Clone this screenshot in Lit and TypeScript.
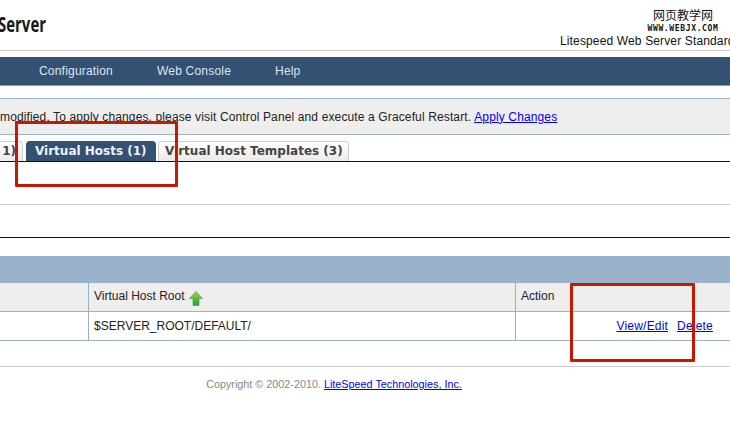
import { LitElement, html, css } from "lit";
import { customElement } from "lit/decorators.js";

@customElement("app-root")
export class AppRoot extends LitElement {
  static styles = css`
    :host { display: block; position: relative; width: 730px; height: 434px; overflow: hidden; background: #fff; font-family: "Liberation Sans", Arial, sans-serif; font-size: 12px; color: #222; }
    a { color: #00f; text-decoration: underline; }
    .top { height: 50px; display: flex; justify-content: space-between; }
    .brand { width: 170px; flex: none; white-space: nowrap; overflow: hidden; }
    .logo { font-family: "Open Sans", sans-serif; font-weight: 700; font-size: 22px; line-height: 30px; color: #1a1a1a; margin: 8px 0 0 -2px; transform: scaleX(0.68); transform-origin: left center; }
    .right { width: 170px; flex: none; overflow: hidden; white-space: nowrap; }
    .wm { display: flex; flex-direction: column; align-items: center; width: 90px; margin: 8px 0 0 78px; color: #111; }
    .wm b { font: 400 12px/14px "Noto Sans CJK SC", sans-serif; }
    .wm i { font: 700 8px/10px "DejaVu Sans Mono", monospace; letter-spacing: 0.65px; margin-top: 2px; }
    .title { font-size: 12px; line-height: 14px; color: #111; letter-spacing: 0.14px; }
    .rule { height: 1px; background: #ccc; }
    .nav { margin-top: 6px; height: 28px; background: #345073; border-bottom: 1px solid #999; display: flex; align-items: center; padding-left: 39px; gap: 44px; color: #dfe6ee; letter-spacing: 0.2px; }
    .notice { margin-top: 12px; height: 35px; border-top: 1px solid #9ab3cf; border-bottom: 1px solid #9ab3cf; background: #eee; display: flex; align-items: center; white-space: nowrap; color: #222; letter-spacing: 0.13px; }
    .notice a { margin-left: 3px; }
    .tabs { margin: 5px 0 0 -60px; height: 21px; display: flex; align-items: flex-end; gap: 2px; font: 700 12px/20px "DejaVu Sans", sans-serif; }
    .tab { height: 20px; box-sizing: border-box; padding: 0 6px; border-radius: 4px 4px 0 0; border: 1px solid #ccc; border-bottom: none; background: linear-gradient(#fff, #eaeaea); color: #444; white-space: nowrap; line-height: 19px; }
    .tab.first { width: 83px; text-align: right; padding: 0 6px 0 0; }
    .tab.active { background: #345073; border-color: #345073; color: #eef2f6; margin-left: 1px; width: 130px; padding: 0 8px; }
    .tab.last { width: 191px; }
    .black { height: 1px; background: #111; }
    .gray { height: 1px; background: #ccc; }
    .g1 { margin-top: 42px; }
    .b2 { margin-top: 32px; }
    .band { margin-top: 18px; height: 27px; background: #9ab2cc; }
    .grid { display: grid; grid-template-columns: 88px 427px 1fr; border-bottom: 1px solid #9ab2cc; height: 28px; }
    .cell { box-sizing: border-box; height: 28px; border-left: 1px solid #9ab2cc; padding: 0 5px; display: flex; align-items: center; white-space: nowrap; }
    .cell:first-child { border-left: none; }
    .head { background: #eee; }
    .head .cell { padding-bottom: 3px; }
    .actions { justify-content: flex-end; gap: 9px; padding-right: 17px; letter-spacing: 0.2px; }
    .arrow { width: 14px; height: 15px; margin: 5px 0 0 4px; flex: none; }
    .g2 { margin-top: 25px; }
    .foot { text-align: center; font-size: 10.8px; color: #888; margin-top: 10px; padding-right: 62px; line-height: 14px; white-space: nowrap; }
    .mark { position: absolute; box-sizing: border-box; border: 3px solid #c81800; border-radius: 1px; }
    .m1 { left: 15px; top: 121px; width: 163px; height: 66px; }
    .m2 { left: 570px; top: 283px; width: 125px; height: 79px; }
  `;

  render() {
    return html`
      <div class="top">
        <div class="brand"><div class="logo">Server</div></div>
        <div class="right">
          <div class="wm"><b>网页教学网</b><i>WWW.WEBJX.COM</i></div>
          <div class="title">Litespeed Web Server Standard</div>
        </div>
      </div>
      <div class="rule"></div>
      <div class="nav"><span>Configuration</span><span>Web Console</span><span>Help</span></div>
      <div class="notice"><span>modified. To apply changes, please visit Control Panel and execute a Graceful Restart.</span><a href="#">Apply Changes</a></div>
      <div class="tabs">
        <div class="tab first">1)</div>
        <div class="tab active">Virtual Hosts (1)</div>
        <div class="tab last">Virtual Host Templates (3)</div>
      </div>
      <div class="black"></div>
      <div class="gray g1"></div>
      <div class="black b2"></div>
      <div class="band"></div>
      <div class="grid head">
        <div class="cell"></div>
        <div class="cell">Virtual Host Root
          <svg class="arrow" viewBox="0 0 14 15"><defs><linearGradient id="g" x1="0" y1="0" x2="0" y2="1"><stop offset="0" stop-color="#9fd44c"/><stop offset="1" stop-color="#2f9a3c"/></linearGradient></defs><path d="M7 .5 13.5 7.5H10v7H4v-7H.5z" fill="url(#g)" stroke="#4a9c3a" stroke-width=".6"/></svg>
        </div>
        <div class="cell">Action</div>
      </div>
      <div class="grid body">
        <div class="cell"></div>
        <div class="cell">$SERVER_ROOT/DEFAULT/</div>
        <div class="cell actions"><a href="#">View/Edit</a><a href="#">Delete</a></div>
      </div>
      <div class="gray g2"></div>
      <div class="foot">Copyright © 2002-2010. <a href="#">LiteSpeed Technologies, Inc.</a></div>
      <div class="mark m1"></div>
      <div class="mark m2"></div>
    `;
  }
}
